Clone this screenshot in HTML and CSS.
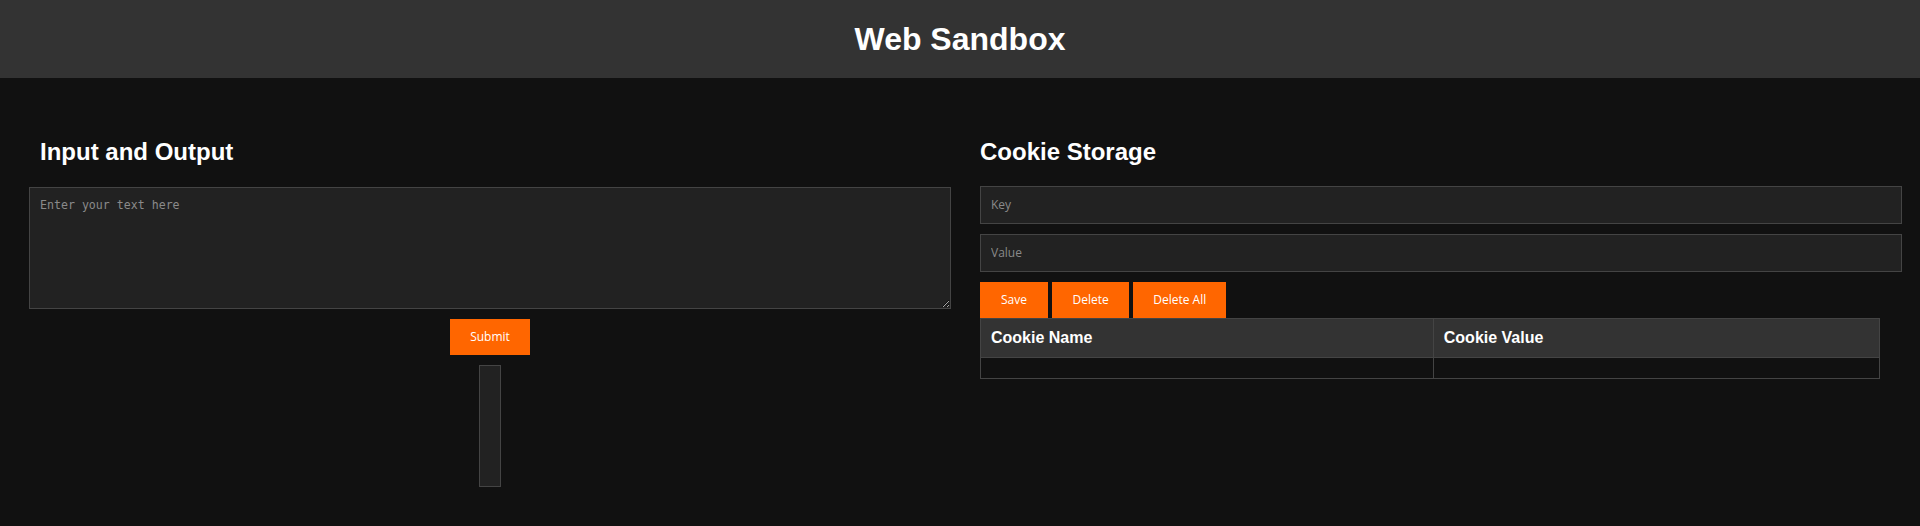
FILE: index.html
```html
<!DOCTYPE html>
<html lang="en">
<head>
<meta charset="utf-8">
<title>Web Sandbox</title>
<link rel="stylesheet" href="styles.css">
</head>
<body>
<header class="top-bar">
  <h1 class="title">Web Sandbox</h1>
</header>
<main class="layout">
  <section class="panel panel-io">
    <h2 class="panel-title">Input and Output</h2>
    <textarea class="text-input" placeholder="Enter your text here"></textarea>
    <button class="btn btn-submit">Submit</button>
    <div class="output-box"></div>
  </section>
  <section class="panel panel-cookies">
    <h2 class="panel-title">Cookie Storage</h2>
    <input class="field" type="text" placeholder="Key">
    <input class="field" type="text" placeholder="Value">
    <div class="btn-row">
      <button class="btn btn-save">Save</button>
      <button class="btn">Delete</button>
      <button class="btn">Delete All</button>
    </div>
    <table class="cookie-table">
      <thead>
        <tr><th>Cookie Name</th><th>Cookie Value</th></tr>
      </thead>
      <tbody>
        <tr><td></td><td></td></tr>
      </tbody>
    </table>
  </section>
</main>
</body>
</html>
```

FILE: styles.css
```css
html, body {
  margin: 0;
  padding: 0;
  background: #111111;
  color: #ffffff;
  font-family: "Liberation Sans", Arial, sans-serif;
}

.top-bar {
  background: #333333;
  padding: 20px 0;
  text-align: center;
}

.title {
  margin: 0;
  font-size: 32px;
  line-height: 38px;
  font-weight: bold;
}

.layout {
  display: flex;
  gap: 40px;
  padding: 60px 40px 40px;
}

.panel {
  width: 900px;
  flex: 0 0 900px;
  display: flex;
  flex-direction: column;
}

.panel-io {
  align-items: center;
}

.panel-cookies {
  align-items: flex-start;
}

.panel-title {
  align-self: stretch;
  margin: 0 0 20px;
  font-size: 24px;
  line-height: 28px;
  font-weight: bold;
}

.panel-io .panel-title {
  margin-bottom: 21px;
}

.text-input {
  flex: none;
  width: 900px;
  height: 100px;
  padding: 10px;
  margin: 0;
  background: #222222;
  color: #ffffff;
  border: 1px solid #444444;
  font-family: "DejaVu Sans Mono", monospace;
  font-size: 11.6px;
  resize: both;
  outline: none;
}

.text-input::placeholder {
  color: #8a8a8a;
}

.btn {
  background: #ff6600;
  color: #ffffff;
  border: none;
  border-radius: 0;
  padding: 10px 20px;
  margin: 0;
  font-family: "Open Sans", sans-serif;
  font-size: 12px;
  line-height: 16px;
  cursor: pointer;
}

.btn-save {
  padding: 10px 21px;
}

.btn-submit {
  margin-top: 10px;
}

.output-box {
  margin-top: 10px;
  width: 0;
  height: 100px;
  padding: 10px;
  background: #222222;
  border: 1px solid #444444;
}

.field {
  flex: none;
  width: 900px;
  padding: 10px;
  margin: 0 0 10px;
  background: #222222;
  color: #ffffff;
  border: 1px solid #444444;
  font-family: "Open Sans", sans-serif;
  font-size: 12px;
  line-height: 16px;
  height: 16px;
  outline: none;
}

.field::placeholder {
  color: #8a8a8a;
}

.btn-row {
  display: flex;
  gap: 4.5px;
}

.cookie-table {
  width: 900px;
  border-collapse: collapse;
  border: 1px solid #444444;
}

.cookie-table th,
.cookie-table td {
  border: 1px solid #444444;
  padding: 10px;
  text-align: left;
}

.cookie-table th {
  background: #333333;
  font-size: 16px;
  line-height: 18px;
  font-weight: bold;
}

.cookie-table td {
  height: 0;
  line-height: 0;
}
```
